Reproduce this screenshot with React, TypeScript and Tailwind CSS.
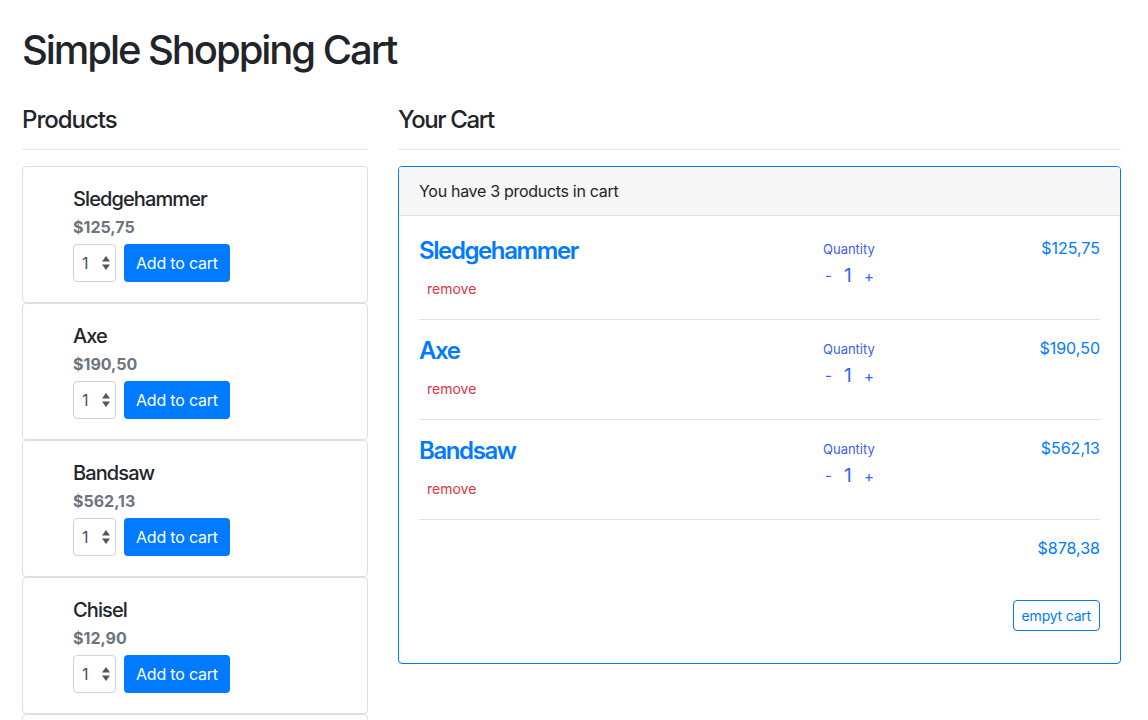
import React from "react";

const products = [
  { name: "Sledgehammer", price: "$125,75" },
  { name: "Axe", price: "$190,50" },
  { name: "Bandsaw", price: "$562,13" },
  { name: "Chisel", price: "$12,90" },
  { name: "Hacksaw", price: "$18,45" },
];

const cart = [
  { name: "Sledgehammer", price: "$125,75" },
  { name: "Axe", price: "$190,50" },
  { name: "Bandsaw", price: "$562,13" },
];

function Spinner() {
  return (
    <svg width="8" height="14" viewBox="0 0 8 14" className="block">
      <path d="M4 0 L8 5.5 L0 5.5 Z" fill="#555" />
      <path d="M4 14 L8 8.5 L0 8.5 Z" fill="#555" />
    </svg>
  );
}

function ProductCard({ name, price }: { name: string; price: string }) {
  return (
    <div className="border border-[#dfdfdf] rounded-[4px] pl-[50px] pr-[20px] pt-[20px] pb-[20px] bg-white">
      <div className="text-[20px] leading-[24px] font-medium tracking-[-0.9px] text-[#212529]">{name}</div>
      <div className="mt-[4px] text-[16px] leading-[24px] font-bold text-[#6c757d]">{price}</div>
      <div className="mt-[5px] flex items-center gap-[8px]">
        <div className="w-[43px] h-[38px] border border-[#ced4da] rounded-[4px] flex items-center justify-between pl-[8px] pr-[5px]">
          <span className="text-[16px] text-[#495057]">1</span>
          <Spinner />
        </div>
        <button className="h-[38px] px-[12px] rounded-[4px] bg-[#007bff] text-white text-[16px] leading-[24px] tracking-[-0.2px]">
          Add to cart
        </button>
      </div>
    </div>
  );
}

function CartItem({ name, price }: { name: string; price: string }) {
  return (
    <div className="pt-[16px] pb-[15px] border-b border-[#e2e2e2] grid grid-cols-[1fr_97px_180px]">
      <div>
        <div className="text-[24px] leading-[29px] font-semibold tracking-[-1.4px] text-[#007bff]">{name}</div>
        <div className="mt-[8px] px-[8px] py-[4px] text-[14px] leading-[23px] text-[#dc3545]">remove</div>
      </div>
      <div className="pt-[3px]">
        <div className="text-[13px] leading-[20px] text-[#3d63ea]">Quantity</div>
        <div className="flex items-center mt-[4px] text-[#2a6af0]">
          <span className="w-[21px] pl-[2px] text-[15px] leading-[22px]">-</span>
          <span className="w-[20px] text-[19px] leading-[22px]">1</span>
          <span className="text-[15px] leading-[22px] mt-[3px]">+</span>
        </div>
      </div>
      <div className="text-right text-[16px] leading-[24px] text-[#007bff]">{price}</div>
    </div>
  );
}

export default function App() {
  return (
    <div className="min-h-screen bg-white text-[#212529] px-[22px] pt-[26px]" style={{ fontFamily: "Inter, 'Liberation Sans', sans-serif" }}>
      <h1 className="text-[40px] leading-[48px] font-medium tracking-[-2.05px]">Simple Shopping Cart</h1>
      <div className="mt-[31px] flex gap-[30px] items-start">
        <div className="w-[346px] shrink-0">
          <h4 className="text-[24px] leading-[29px] font-medium tracking-[-1px]">Products</h4>
          <div className="mt-[15px] mb-[16px] h-px bg-[#e5e5e5]" />
          <div className="flex flex-col">
            {products.map((p) => (
              <ProductCard key={p.name} name={p.name} price={p.price} />
            ))}
          </div>
        </div>
        <div className="w-[723px] shrink-0">
          <h4 className="text-[24px] leading-[29px] font-medium tracking-[-1.4px]">Your Cart</h4>
          <div className="mt-[15px] mb-[16px] h-px bg-[#e5e5e5]" />
          <div className="border border-[#007bff] rounded-[4px] overflow-hidden">
            <div className="bg-[#f7f7f7] border-b border-[#dfdfdf] px-[20px] py-[12px] text-[16px] leading-[24px] tracking-[-0.3px]">
              You have 3 products in cart
            </div>
            <div className="px-[20px] pt-[4px] pb-[32px]">
              {cart.map((c) => (
                <CartItem key={c.name} name={c.name} price={c.price} />
              ))}
              <div className="pt-[16px] text-right text-[16px] leading-[24px] text-[#007bff]">$878,38</div>
              <div className="mt-[40px] flex justify-end">
                <button className="h-[31px] px-[8px] border border-[#007bff] rounded-[4px] text-[14px] leading-[21px] tracking-[-0.2px] text-[#007bff]">
                  empyt cart
                </button>
              </div>
            </div>
          </div>
        </div>
      </div>
    </div>
  );
}
